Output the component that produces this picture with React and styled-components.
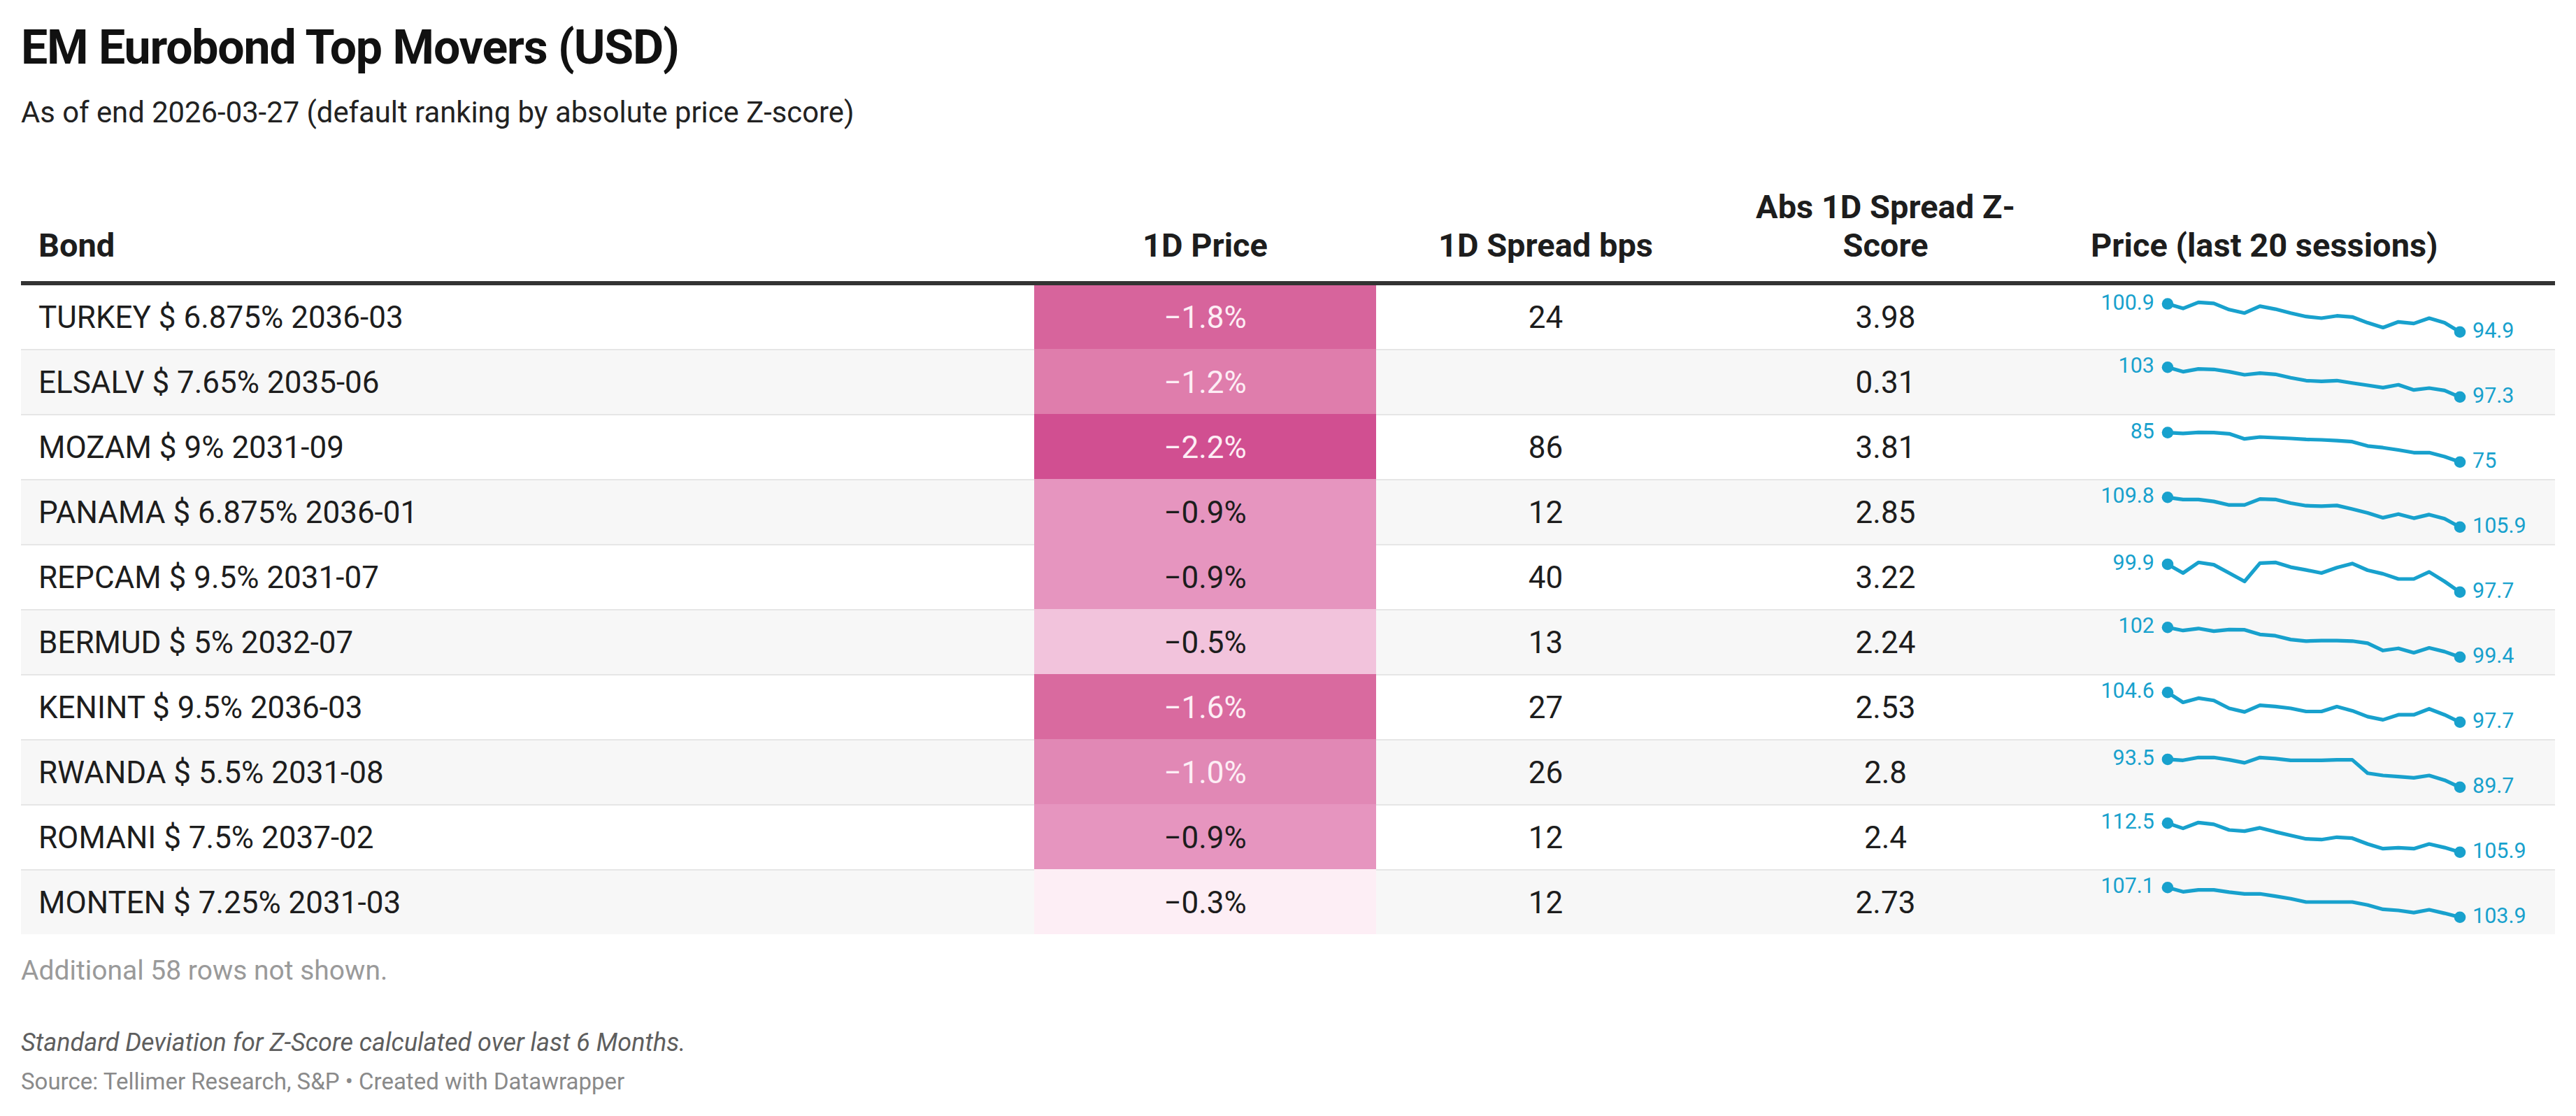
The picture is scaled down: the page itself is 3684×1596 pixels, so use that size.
import React from 'react';
import styled, { createGlobalStyle } from 'styled-components';

const GlobalStyle = createGlobalStyle`
  html, body { margin: 0; padding: 0; background: #ffffff; }
  body { font-family: Roboto, "Liberation Sans", Arial, sans-serif; color: #1d1d1d; }
`;

const Page = styled.div`
  width: 3684px;
  box-sizing: border-box;
  padding: 27px 30px 40px;
`;

const Title = styled.h1`
  margin: 0;
  font-size: 68px;
  line-height: 83px;
  font-weight: 700;
  letter-spacing: -1.2px;
  color: #111111;
`;

const Subtitle = styled.p`
  margin: 26px 0 0;
  font-size: 41.8px;
  line-height: 49px;
  font-weight: 400;
  color: #222222;
`;

const Table = styled.table`
  width: 100%;
  margin-top: 83px;
  border-collapse: separate;
  border-spacing: 0;
  table-layout: fixed;
`;

const HeadCell = styled.th`
  padding: 0 25px 24px;
  padding-left: ${p => p.$padLeft || 25}px;
  vertical-align: bottom;
  text-align: ${p => p.$align || 'center'};
  font-size: 47px;
  line-height: 55px;
  font-weight: 700;
  color: #1d1d1d;
  border-bottom: 6px solid #333333;
`;

const Row = styled.tr`
  background: ${p => (p.$striped ? '#f7f7f7' : '#ffffff')};
`;

const Cell = styled.td`
  height: 91px;
  padding: 0 25px;
  vertical-align: middle;
  text-align: ${p => p.$align || 'center'};
  font-size: 44px;
  color: #1d1d1d;
  white-space: nowrap;
  border-top: ${p => (p.$first ? '0' : '2px solid #e6e6e6')};
`;

const HeatCell = styled(Cell)`
  background: ${p => p.$bg};
  color: ${p => (p.$light ? '#fdeef5' : '#1d1d1d')};
  border-top-color: ${p => p.$bg};
`;

const SparkCell = styled(Cell)`
  padding: 0;
`;

const SparkSvg = styled.svg`
  display: block;
  overflow: visible;
`;

const Notes = styled.p`
  margin: 29px 0 0;
  font-size: 39px;
  line-height: 47px;
  color: #9a9a9a;
`;

const Caption = styled.p`
  margin: 59px 0 0;
  font-size: 36px;
  line-height: 41px;
  font-style: italic;
  color: #5e5e5e;
`;

const Source = styled.p`
  margin: 15px 0 0;
  font-size: 33px;
  line-height: 40px;
  color: #8a8a8a;
`;

/* Sparkline samples: traced levels, larger value = lower on the chart (lower price). */
const rows = [
  { bond: 'TURKEY $ 6.875% 2036-03', price: '−1.8%', bg: '#d7649c', light: true, spread: '24', z: '3.98', first: '100.9', last: '94.9',
    trace: [100, 120, 93, 98, 125, 140, 110, 123, 140, 155, 162, 152, 157, 182, 203, 178, 185, 162, 182, 222] },
  { bond: 'ELSALV $ 7.65% 2035-06', price: '−1.2%', bg: '#df7dac', light: true, spread: '', z: '0.31', first: '103', last: '97.3',
    trace: [373, 392, 380, 382, 392, 405, 398, 403, 418, 430, 433, 430, 440, 450, 460, 448, 470, 462, 472, 500] },
  { bond: 'MOZAM $ 9% 2031-09', price: '−2.2%', bg: '#d14f91', light: true, spread: '86', z: '3.81', first: '85', last: '75',
    trace: [653, 657, 652, 653, 658, 680, 672, 675, 678, 682, 684, 687, 692, 710, 717, 727, 738, 738, 755, 778] },
  { bond: 'PANAMA $ 6.875% 2036-01', price: '−0.9%', bg: '#e695bf', light: false, spread: '12', z: '2.85', first: '109.8', last: '105.9',
    trace: [933, 942, 942, 950, 965, 965, 940, 942, 957, 968, 970, 967, 982, 998, 1018, 1003, 1020, 1005, 1022, 1057] },
  { bond: 'REPCAM $ 9.5% 2031-07', price: '−0.9%', bg: '#e695bf', light: false, spread: '40', z: '3.22', first: '99.9', last: '97.7',
    trace: [1218, 1255, 1210, 1220, 1255, 1290, 1213, 1210, 1230, 1242, 1255, 1232, 1215, 1243, 1258, 1280, 1280, 1250, 1290, 1335] },
  { bond: 'BERMUD $ 5% 2032-07', price: '−0.5%', bg: '#f2c3dc', light: false, spread: '13', z: '2.24', first: '102', last: '99.4',
    trace: [-20, -6, -15, -3, -10, -9, 12, 18, 35, 42, 40, 40, 42, 52, 85, 75, 95, 73, 90, 115] },
  { bond: 'KENINT $ 9.5% 2036-03', price: '−1.6%', bg: '#d96a9f', light: true, spread: '27', z: '2.53', first: '104.6', last: '97.7',
    trace: [268, 310, 292, 302, 335, 350, 322, 327, 335, 348, 348, 328, 345, 370, 383, 362, 362, 337, 362, 393] },
  { bond: 'RWANDA $ 5.5% 2031-08', price: '−1.0%', bg: '#e188b5', light: true, spread: '26', z: '2.8', first: '93.5', last: '89.7',
    trace: [553, 557, 545, 545, 555, 568, 545, 550, 557, 557, 557, 555, 555, 612, 622, 627, 632, 622, 642, 672] },
  { bond: 'ROMANI $ 7.5% 2037-02', price: '−0.9%', bg: '#e695bf', light: false, spread: '12', z: '2.4', first: '112.5', last: '105.9',
    trace: [828, 850, 825, 833, 857, 862, 848, 865, 880, 895, 898, 888, 892, 917, 937, 933, 937, 917, 932, 952] },
  { bond: 'MONTEN $ 7.25% 2031-03', price: '−0.3%', bg: '#fdeef5', light: false, spread: '12', z: '2.73', first: '107.1', last: '103.9',
    trace: [1105, 1123, 1115, 1115, 1125, 1132, 1132, 1142, 1153, 1167, 1167, 1167, 1167, 1180, 1198, 1203, 1212, 1200, 1215, 1232] },
];

const BLUE = '#18a1cd';

function Sparkline({ trace, first, last }) {
  const W = 714;
  const H = 91;
  const X0 = 160;
  const X1 = 578;
  const CH = 42.5;
  const top = (H - CH) / 2;
  const min = Math.min(...trace);
  const max = Math.max(...trace);
  const span = max - min || 1;
  const pts = trace.map((v, i) => [
    X0 + (i * (X1 - X0)) / (trace.length - 1),
    top + ((v - min) / span) * CH,
  ]);
  const d = pts.map((p, i) => `${i ? 'L' : 'M'}${p[0].toFixed(1)},${p[1].toFixed(1)}`).join(' ');
  const [sx, sy] = pts[0];
  const [ex, ey] = pts[pts.length - 1];
  return (
    <SparkSvg width={W} height={H} viewBox={`0 0 ${W} ${H}`}>
      <path d={d} fill="none" stroke={BLUE} strokeWidth="5.2" strokeLinejoin="round" strokeLinecap="round" />
      <circle cx={sx} cy={sy} r="8.3" fill={BLUE} />
      <circle cx={ex} cy={ey} r="8.3" fill={BLUE} />
      <text x={sx - 19} y={sy + 8} textAnchor="end" fontSize="30.5" fill={BLUE} fontFamily="Roboto, sans-serif">{first}</text>
      <text x={ex + 18} y={ey + 8} textAnchor="start" fontSize="30.5" fill={BLUE} fontFamily="Roboto, sans-serif">{last}</text>
    </SparkSvg>
  );
}

export default function App() {
  return (
    <Page>
      <GlobalStyle />
      <Title>EM Eurobond Top Movers (USD)</Title>
      <Subtitle>As of end 2026-03-27 (default ranking by absolute price Z-score)</Subtitle>
      <Table>
        <colgroup>
          <col style={{ width: 1449 }} />
          <col style={{ width: 489 }} />
          <col style={{ width: 485 }} />
          <col style={{ width: 487 }} />
          <col style={{ width: 714 }} />
        </colgroup>
        <thead>
          <tr>
            <HeadCell $align="left">Bond</HeadCell>
            <HeadCell>1D Price</HeadCell>
            <HeadCell>1D Spread bps</HeadCell>
            <HeadCell>Abs 1D Spread Z-<br />Score</HeadCell>
            <HeadCell $align="left" $padLeft={50}>Price (last 20 sessions)</HeadCell>
          </tr>
        </thead>
        <tbody>
          {rows.map((r, i) => (
            <Row key={r.bond} $striped={i % 2 === 1}>
              <Cell $align="left" $first={i === 0}>{r.bond}</Cell>
              <HeatCell $first={i === 0} $bg={r.bg} $light={r.light}>{r.price}</HeatCell>
              <Cell $first={i === 0}>{r.spread}</Cell>
              <Cell $first={i === 0}>{r.z}</Cell>
              <SparkCell $first={i === 0}>
                <Sparkline trace={r.trace} first={r.first} last={r.last} />
              </SparkCell>
            </Row>
          ))}
        </tbody>
      </Table>
      <Notes>Additional 58 rows not shown.</Notes>
      <Caption>Standard Deviation for Z-Score calculated over last 6 Months.</Caption>
      <Source>Source: Tellimer Research, S&amp;P • Created with Datawrapper</Source>
    </Page>
  );
}
